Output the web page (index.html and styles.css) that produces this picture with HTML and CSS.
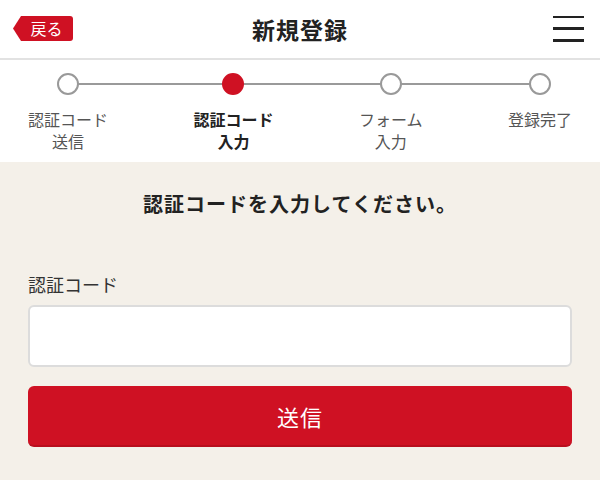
FILE: index.html
```html
<!DOCTYPE html>
<html lang="ja">
<head>
<meta charset="utf-8">
<title>新規登録</title>
<link rel="stylesheet" href="styles.css">
</head>
<body>
<header class="header">
  <a class="back" href="#">戻る</a>
  <h1 class="title">新規登録</h1>
  <button class="menu" aria-label="メニュー"><span></span><span></span><span></span></button>
</header>
<nav class="steps">
  <div class="step"><span class="dot"></span><span class="label">認証コード<br>送信</span></div>
  <div class="step active"><span class="dot"></span><span class="label">認証コード<br>入力</span></div>
  <div class="step"><span class="dot"></span><span class="label">フォーム<br>入力</span></div>
  <div class="step"><span class="dot"></span><span class="label">登録完了</span></div>
</nav>
<main class="main">
  <p class="lead">認証コードを入力してください。</p>
  <label class="field-label" for="code">認証コード</label>
  <input class="field" id="code" type="text">
  <button class="submit">送信</button>
</main>
</body>
</html>
```
FILE: styles.css
```css
html, body {
  margin: 0;
  padding: 0;
}
body {
  font-family: "Noto Sans CJK JP", "Noto Sans", sans-serif;
  background: #f4f0e9;
  color: #222;
  min-height: 480px;
}
.header {
  height: 58px;
  background: #fff;
  border-bottom: 2px solid #e2e2e2;
  display: grid;
  grid-template-columns: 1fr auto 1fr;
  align-items: center;
  padding: 0 16px 0 13px;
}
.back {
  justify-self: start;
  width: 60px;
  height: 25px;
  margin-top: -1px;
  box-sizing: border-box;
  padding-left: 7px;
  background: #cf1123;
  color: #fff;
  text-decoration: none;
  font-size: 16px;
  line-height: 25px;
  text-align: center;
  border-radius: 0 3px 3px 0;
  clip-path: polygon(0 50%, 8px 0, 100% 0, 100% 100%, 8px 100%);
}
.title {
  margin: 0 0 0 3px;
  font-size: 23px;
  font-weight: 700;
  letter-spacing: 1px;
  line-height: 30px;
  color: #222;
}
.menu {
  justify-self: end;
  width: 31px;
  height: 26px;
  padding: 0;
  border: 0;
  background: transparent;
  display: flex;
  flex-direction: column;
  justify-content: space-between;
  margin-top: -1px;
}
.menu span {
  display: block;
  height: 2.5px;
  background: #222;
}
.steps {
  position: relative;
  background: #fff;
  display: flex;
  justify-content: space-between;
  align-items: flex-start;
  padding: 13px 28px 12px;
  height: 77px;
}
.steps::before {
  content: "";
  position: absolute;
  top: 23px;
  left: 67px;
  right: 60px;
  height: 2px;
  background: #9a9a9a;
}
.step {
  display: flex;
  flex-direction: column;
  align-items: center;
}
.dot {
  position: relative;
  z-index: 1;
  width: 22px;
  height: 22px;
  box-sizing: border-box;
  border: 2px solid #999;
  border-radius: 50%;
  background: #fff;
}
.step.active .dot {
  border-color: #cf1123;
  background: #cf1123;
}
.label {
  margin-top: 13px;
  font-size: 16px;
  line-height: 22px;
  text-align: center;
  color: #555;
}
.step.active .label {
  color: #222;
  font-weight: 700;
}
.main {
  padding: 27px 28px 20px;
}
.lead {
  margin: 0;
  text-align: center;
  font-size: 20px;
  font-weight: 700;
  letter-spacing: 1px;
  line-height: 30px;
  color: #222;
}
.field-label {
  display: block;
  margin-top: 52px;
  font-size: 18px;
  line-height: 26px;
  color: #333;
}
.field {
  display: block;
  width: 100%;
  height: 62px;
  margin-top: 8px;
  box-sizing: border-box;
  border: 2px solid #dcdcdc;
  border-radius: 6px;
  background: #fff;
  font-size: 18px;
  padding: 0 12px;
}
.submit {
  display: block;
  width: 100%;
  height: 61px;
  margin-top: 19px;
  border: 0;
  border-bottom: 2px solid #b80e1e;
  border-radius: 6px;
  background: #cf1123;
  color: #fff;
  font-family: inherit;
  font-size: 22px;
  letter-spacing: 1px;
}
```
